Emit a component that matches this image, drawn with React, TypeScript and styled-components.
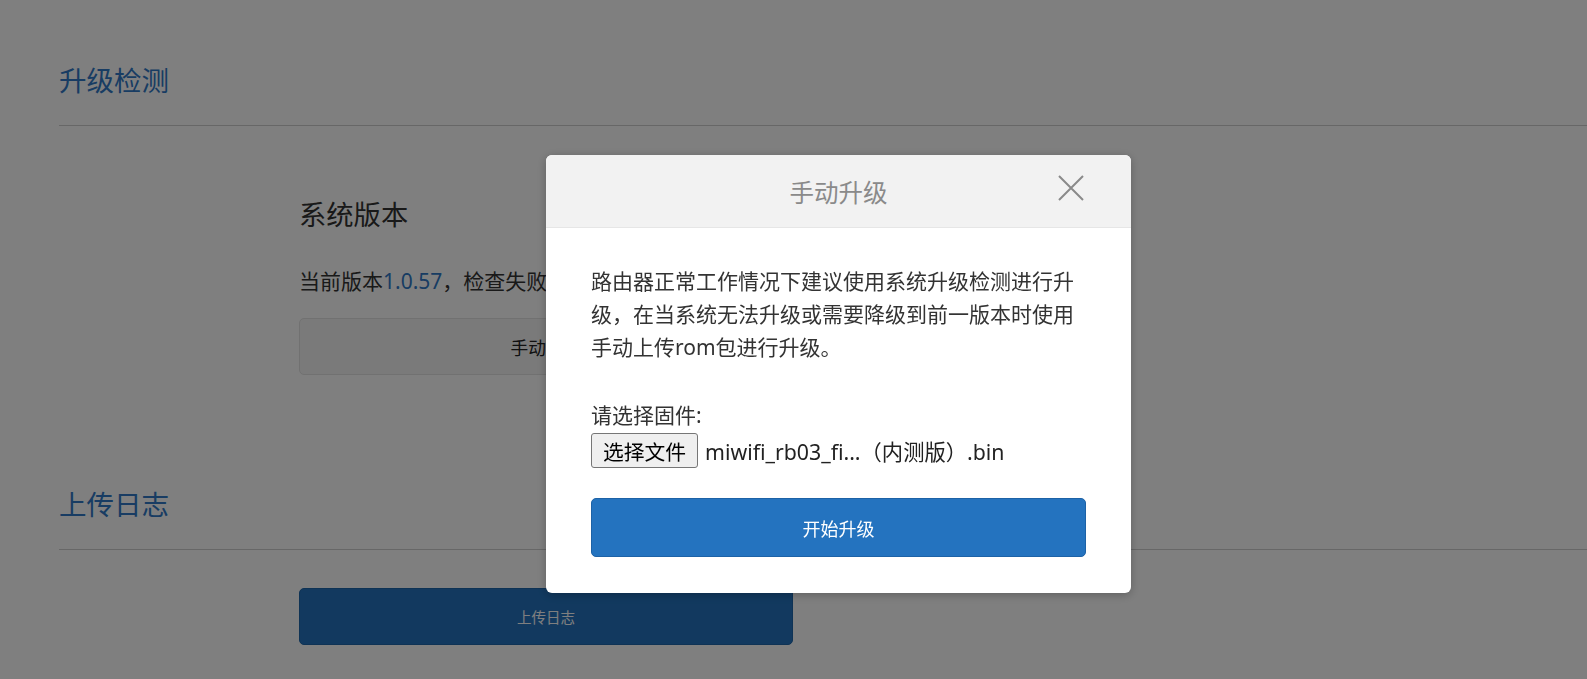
import React from "react";
import styled, { createGlobalStyle } from "styled-components";

const GlobalStyle = createGlobalStyle`
  html, body {
    margin: 0;
    padding: 0;
    background: #ffffff;
  }
  body {
    font-family: "Noto Sans", "Noto Sans CJK SC", sans-serif;
    color: #333333;
    overflow: hidden;
  }
  * { box-sizing: border-box; }
`;

const Page = styled.div`
  width: 1587px;
  height: 679px;
  padding-left: 59px;
  padding-top: 61px;
  display: flex;
  flex-direction: column;
`;

const Section = styled.section<{ $gapTop?: number }>`
  display: flex;
  flex-direction: column;
  margin-top: ${(p) => p.$gapTop ?? 0}px;
`;

const SectionTitle = styled.h2`
  margin: 0;
  font-size: 27.5px;
  font-weight: 400;
  line-height: 40px;
  color: #3079c6;
  padding-bottom: 24px;
  border-bottom: 1px solid #cfcfcf;
`;

const SectionBody = styled.div<{ $padTop: number }>`
  padding-left: 240px;
  padding-top: ${(p) => p.$padTop}px;
  display: flex;
  flex-direction: column;
  align-items: flex-start;
`;

const SubTitle = styled.h3`
  margin: 0;
  font-size: 27.3px;
  font-weight: 400;
  line-height: 40px;
  color: #333333;
`;

const InfoText = styled.p`
  margin: 30px 0 0;
  font-size: 21px;
  line-height: 32px;
  color: #333333;
  white-space: nowrap;
`;

const VersionLink = styled.span`
  color: #3079c6;
`;

const WideButton = styled.button<{ $primary?: boolean; $top: number }>`
  margin-top: ${(p) => p.$top}px;
  width: 494px;
  height: 57px;
  border-radius: 5px;
  font-family: "Noto Sans CJK SC", sans-serif;
  font-size: ${(p) => (p.$primary ? "14.5px" : "17.7px")};
  cursor: pointer;
  background: ${(p) => (p.$primary ? "#2473bf" : "#f4f4f4")};
  color: ${(p) => (p.$primary ? "#ffffff" : "#222222")};
  border: 1px solid ${(p) => (p.$primary ? "#1f66aa" : "#e3e3e3")};
`;

const Overlay = styled.div`
  position: fixed;
  inset: 0;
  background: rgba(0, 0, 0, 0.5);
`;

const Modal = styled.div`
  position: fixed;
  left: 546px;
  top: 155px;
  width: 585px;
  background: #ffffff;
  border-radius: 6px;
  overflow: hidden;
  box-shadow: 0 2px 10px rgba(0, 0, 0, 0.25);
  display: flex;
  flex-direction: column;
`;

const ModalHeader = styled.div`
  position: relative;
  height: 73px;
  background: #f2f2f2;
  border-bottom: 1px solid #e6e6e6;
  display: flex;
  align-items: center;
  justify-content: center;
`;

const ModalTitle = styled.h4`
  margin: 0;
  font-family: "Noto Sans CJK SC", sans-serif;
  font-size: 24.5px;
  font-weight: 400;
  color: #8a8a8a;
`;

const CloseButton = styled.button`
  position: absolute;
  right: 47px;
  top: 20px;
  width: 26px;
  height: 26px;
  padding: 0;
  border: none;
  background: transparent;
  cursor: pointer;
  display: flex;
  align-items: center;
  justify-content: center;
`;

const ModalBody = styled.div`
  padding: 37px 45px 36px 45px;
  display: flex;
  flex-direction: column;
`;

const Desc = styled.p`
  margin: 0;
  font-size: 21px;
  line-height: 33px;
  color: #333333;
`;

const FieldLabel = styled.div`
  margin-top: 35px;
  font-size: 21px;
  line-height: 33px;
  color: #333333;
`;

const FileRow = styled.div`
  margin-top: 1px;
  display: flex;
  align-items: center;
  gap: 7px;
`;

const FileButton = styled.button`
  height: 35px;
  width: 107px;
  padding: 0;
  background: #efefef;
  border: 1px solid #767676;
  border-radius: 3px;
  font-family: "Noto Sans CJK SC", sans-serif;
  font-size: 20.8px;
  color: #000000;
  display: flex;
  align-items: center;
  justify-content: center;
`;

const FileName = styled.span`
  font-size: 21.3px;
  color: #222222;
`;

const StartButton = styled.button`
  margin-top: 30px;
  height: 59px;
  width: 100%;
  background: #2473bf;
  border: 1px solid #1d62a6;
  border-radius: 5px;
  color: #ffffff;
  font-family: "Noto Sans CJK SC", sans-serif;
  font-size: 18px;
  cursor: pointer;
`;

export default function App() {
  return (
    <>
      <GlobalStyle />
      <Page>
        <Section>
          <SectionTitle>升级检测</SectionTitle>
          <SectionBody $padTop={69}>
            <SubTitle>系统版本</SubTitle>
            <InfoText>
              当前版本<VersionLink>1.0.57</VersionLink>，检查失败，请稍后重试
            </InfoText>
            <WideButton $top={21}>手动升级</WideButton>
          </SectionBody>
        </Section>
        <Section $gapTop={110}>
          <SectionTitle>上传日志</SectionTitle>
          <SectionBody $padTop={38}>
            <WideButton $primary $top={0}>上传日志</WideButton>
          </SectionBody>
        </Section>
      </Page>
      <Overlay />
      <Modal>
        <ModalHeader>
          <ModalTitle>手动升级</ModalTitle>
          <CloseButton aria-label="关闭">
            <svg width="26" height="26" viewBox="0 0 26 26">
              <path d="M1 1 L25 25 M25 1 L1 25" stroke="#8a8a8a" strokeWidth="2" fill="none" />
            </svg>
          </CloseButton>
        </ModalHeader>
        <ModalBody>
          <Desc>
            路由器正常工作情况下建议使用系统升级检测进行升级，在当系统无法升级或需要降级到前一版本时使用手动上传rom包进行升级。
          </Desc>
          <FieldLabel>请选择固件:</FieldLabel>
          <FileRow>
            <FileButton>选择文件</FileButton>
            <FileName>miwifi_rb03_fi...（内测版）.bin</FileName>
          </FileRow>
          <StartButton>开始升级</StartButton>
        </ModalBody>
      </Modal>
    </>
  );
}
